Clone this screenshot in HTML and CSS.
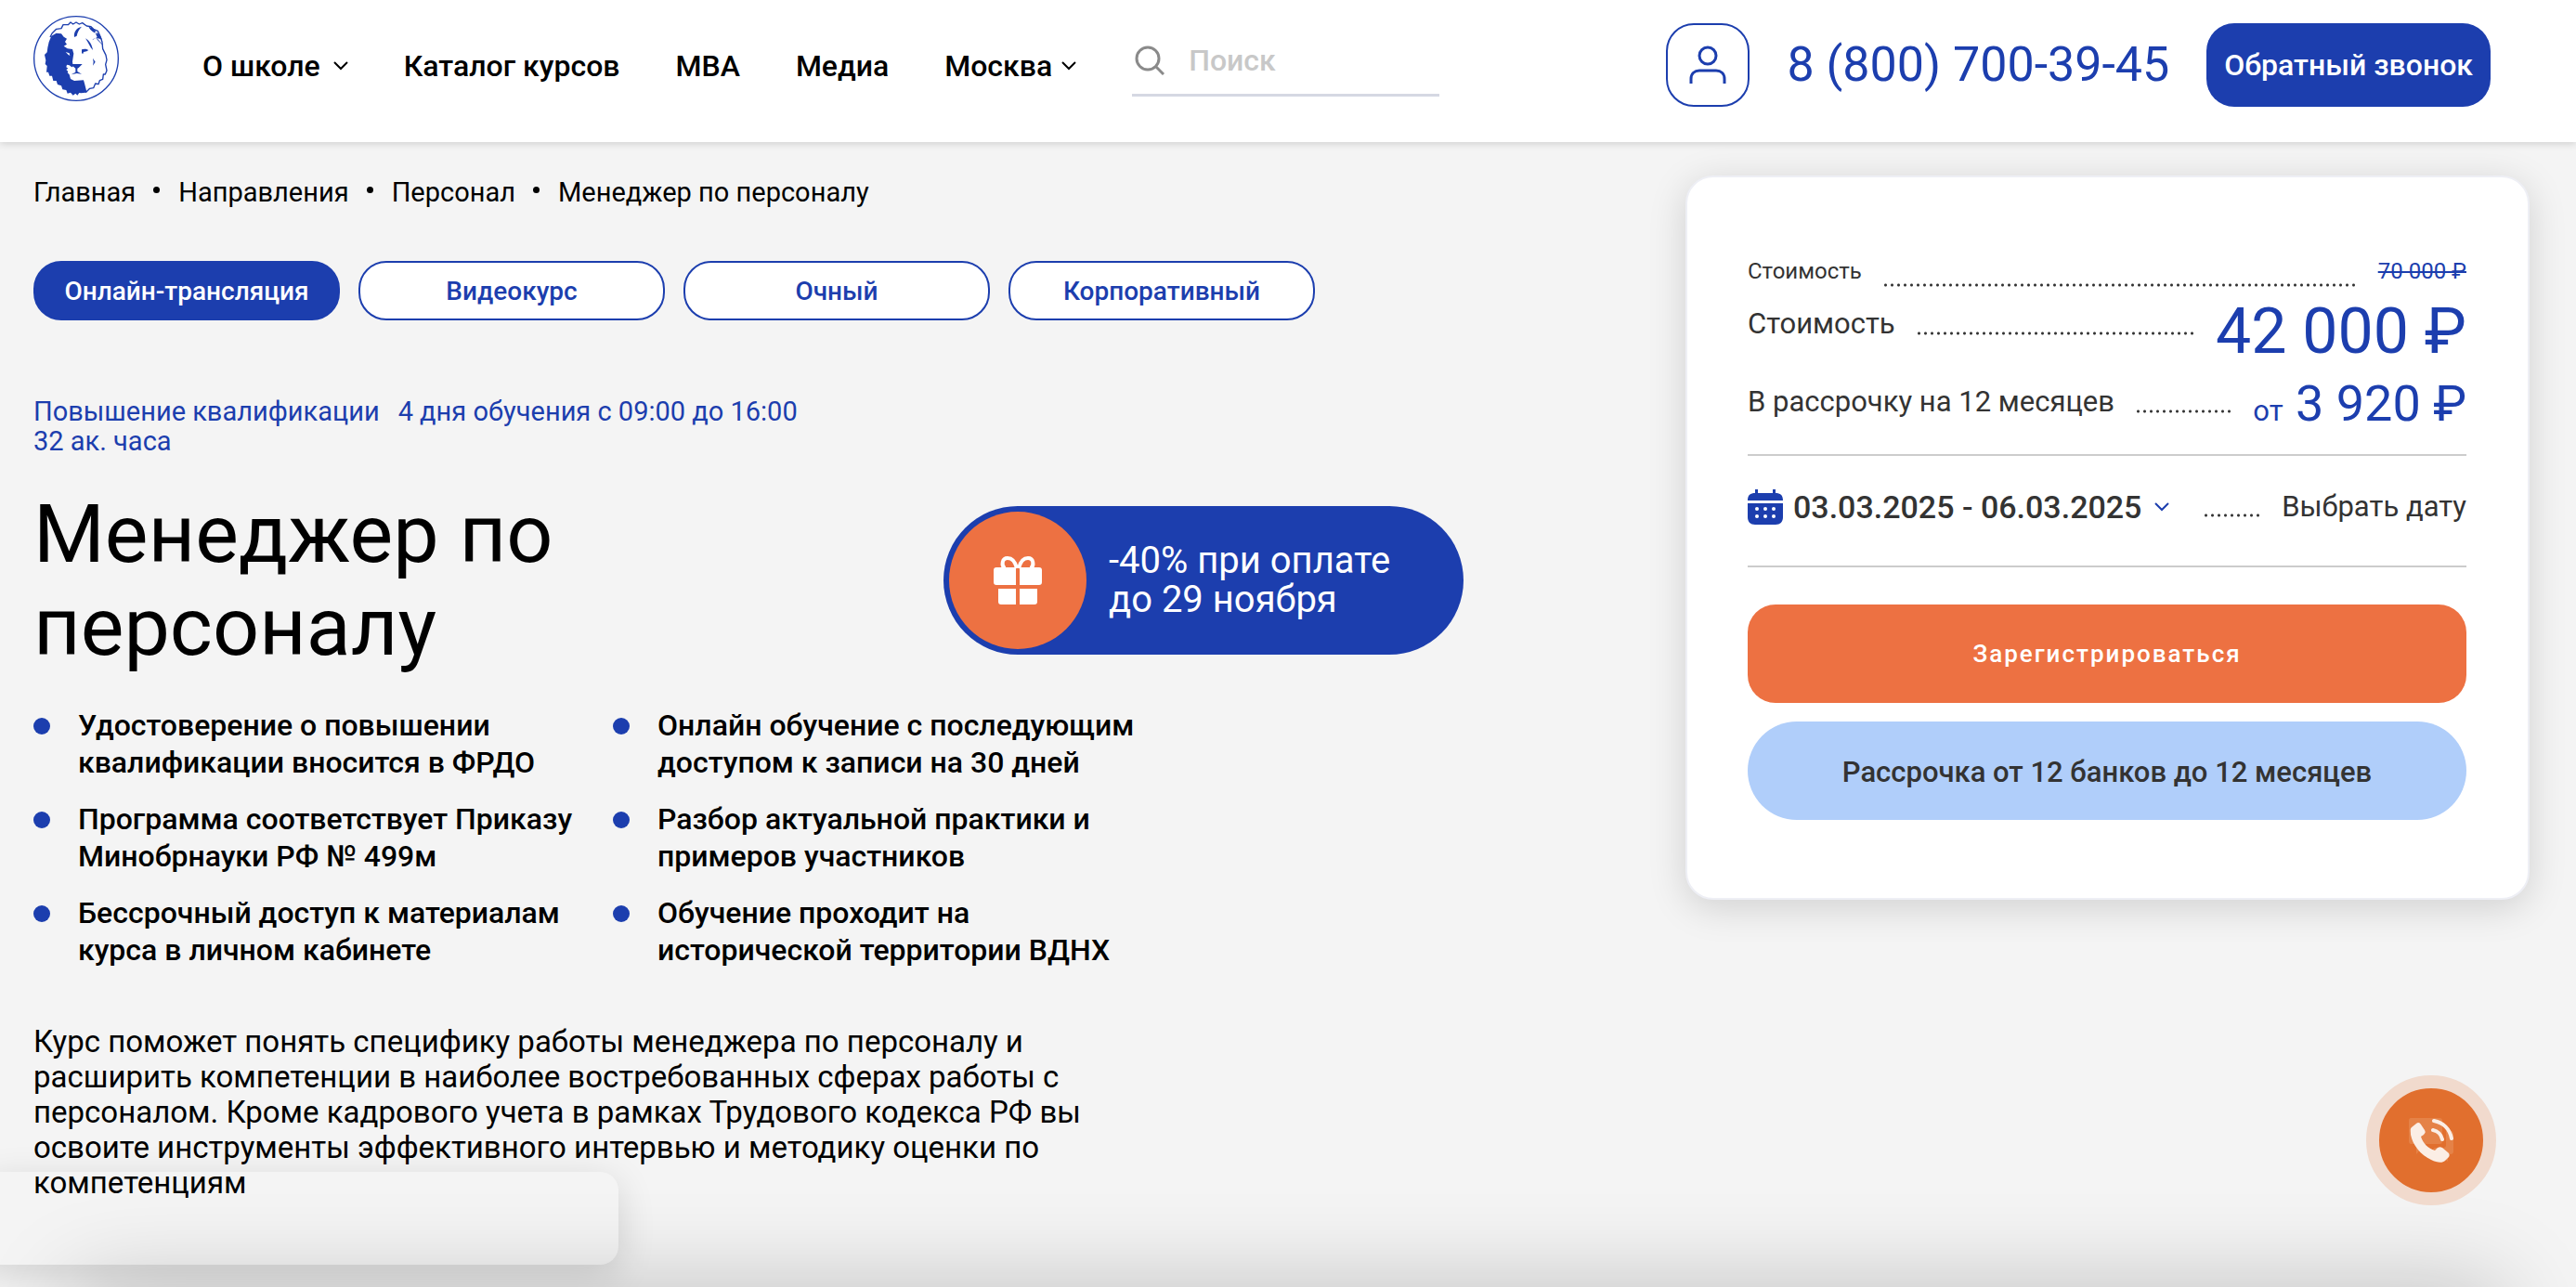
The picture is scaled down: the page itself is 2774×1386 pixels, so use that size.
FILE: index.html
```html
<!doctype html>
<html lang="ru">
<head>
<meta charset="utf-8">
<meta name="viewport" content="width=device-width, initial-scale=1">
<title>Менеджер по персоналу</title>
<link rel="stylesheet" href="styles.css">
</head>

<body>
<header class="header">
	<a class="logo" href="#" aria-label="На главную">
		<svg viewBox="30 27 276 276" width="92" height="92">
			<circle cx="168" cy="165" r="136" fill="none" stroke="#1c3eae" stroke-width="4"/>
			<path fill="none" stroke="#1c3eae" stroke-width="4" stroke-linejoin="round" d="M84 96L90 84 104 70 120 68 126 56 142 56 150 48 158 54 168 48 178 54 188 50 202 60 216 62 224 70 238 76 246 94 252 112 254 134 264 154 267 170 263 184 267 204 262 216 256 216 254 232 244 236 240 248 230 246 224 260 212 262 200 274 198 266"/>
			<path fill="#1c3eae" d="M88 92L104 83 120 85 128 95 138 101 132 111 138 119 128 125 140 133 156 135 160 149 156 175 158 191 154 193 146 187 138 185 136 193 142 197 136 201 142 207 140 211 146 217 150 231 162 237 192 235 196 249 200 265 198 275 184 277 178 276 172 284 166 278 158 284 150 275 140 278 136 267 124 265 120 253 108 249 104 237 94 237 90 221 82 221 78 209 72 209 74 189 68 183 70 171 66 153 74 145 76 130 80 112z"/>
			<path fill="#fff" d="M134 144l12 4 2 8-6-4z"/>
			<g fill="#1c3eae">
				<path d="M150 183h38l-12 12-4 2v10l14 8-16-2-18 4 14-8v-12z"/>
				<path d="M162 96c-2-16 6-30 24-34-10 10-14 20-16 30z"/>
				<path d="M186 136c6-2 14-3 22 2l-6 4-10 2-2 6-4-2z"/>
				<path d="M198 100c12 6 22 22 24 38-10-10-14-24-24-38z"/>
				<path d="M208 62c16 4 24 14 28 24-10-6-20-8-28-24zM220 106c4-8 14-8 32-2-6-14-12-22-24-26l8 18zM234 98l22 24-4-2-16-16zM222 164l8 12-8 12 2-12z"/>
			</g>
		</svg>
	</a>
	<nav class="menu">
		<a href="#">О школе <svg class="arrow arrow-wide" viewBox="0 0 16 10"><path d="M1 1l7 7 7-7"/></svg></a>
		<a href="#">Каталог курсов</a>
		<a href="#">MBA</a>
		<a href="#">Медиа</a>
		<a href="#">Москва <svg class="arrow" viewBox="0 0 16 10"><path d="M1 1l7 7 7-7"/></svg></a>
	</nav>
	<form class="search">
		<svg viewBox="0 0 32 32" width="32" height="32"><circle cx="14" cy="14" r="12"/><path d="M23 23l8 8"/></svg>
		<input type="text" placeholder="Поиск" aria-label="Поиск">
	</form>
	<div class="contacts">
		<button class="user" type="button" aria-label="Личный кабинет">
			<svg viewBox="0 0 40 42" width="40" height="42"><circle cx="20" cy="11" r="9"/><path d="M2 41v-5c0-6 4-9 9-9h18c5 0 9 3 9 9v5"/></svg>
		</button>
		<a class="phone" href="tel:88007003945">8 (800) 700-39-45</a>
		<button class="callback" type="button">Обратный звонок</button>
	</div>
</header>

<main class="main">
	<section class="course">
		<ul class="crumbs">
			<li><a href="#">Главная</a></li>
			<li><a href="#">Направления</a></li>
			<li><a href="#">Персонал</a></li>
			<li>Менеджер по персоналу</li>
		</ul>
		<div class="formats">
			<button class="format active" type="button">Онлайн-трансляция</button>
			<button class="format" type="button">Видеокурс</button>
			<button class="format" type="button">Очный</button>
			<button class="format" type="button">Корпоративный</button>
		</div>
		<div class="info">
			<span>Повышение квалификации</span>
			<span>4 дня обучения с 09:00 до 16:00</span>
			<span>32 ак. часа</span>
		</div>
		<div class="title">
			<h1>Менеджер по персоналу</h1>
			<div class="sale">
				<div class="sale-icon">
					<svg viewBox="0 0 52 52" width="52" height="52">
						<path fill="none" stroke="#fff" stroke-width="4" d="M25 13C23 5 19 2 15 2c-6 0-7 8-3 11M27 13c2-8 6-11 10-11 6 0 7 8 3 11"/>
						<path fill="#fff" d="M3 12h21v19H3c-2 0-3-1-3-3V15c0-2 1-3 3-3zM28 12h21c2 0 3 1 3 3v13c0 2-1 3-3 3H28zM5 35h19v17H8c-2 0-3-1-3-3zM28 35h19v14c0 2-1 3-3 3H28z"/>
					</svg>
				</div>
				<p>-40% при оплате<br>до 29 ноября</p>
			</div>
		</div>
		<ul class="benefits">
			<li>Удостоверение о повышении<br>квалификации вносится в ФРДО</li>
			<li>Онлайн обучение с последующим<br>доступом к записи на 30 дней</li>
			<li>Программа соответствует Приказу<br>Минобрнауки РФ № 499м</li>
			<li>Разбор актуальной практики и<br>примеров участников</li>
			<li>Бессрочный доступ к материалам<br>курса в личном кабинете</li>
			<li>Обучение проходит на<br>исторической территории ВДНХ</li>
		</ul>
		<p class="about">Курс поможет понять специфику работы менеджера по персоналу и<br>расширить компетенции в наиболее востребованных сферах работы с<br>персоналом. Кроме кадрового учета в рамках Трудового кодекса РФ вы<br>освоите инструменты эффективного интервью и методику оценки по<br>компетенциям</p>
	</section>

	<aside class="card">
		<div class="row row-old">
			<span>Стоимость</span>
			<i class="dots"></i>
			<s>70 000 ₽</s>
		</div>
		<div class="row row-price">
			<span>Стоимость</span>
			<i class="dots"></i>
			<b class="price">42 000 ₽</b>
		</div>
		<div class="row row-credit">
			<span>В рассрочку на 12 месяцев</span>
			<i class="dots"></i>
			<b class="credit"><small>от</small> 3 920 ₽</b>
		</div>
		<div class="row row-date">
			<svg class="calendar" viewBox="0 0 38 38" width="38" height="38">
				<path fill="#1c3eae" d="M0 12C0 6 3 4 8 4V0h3v4h16V0h3v4c5 0 8 2 8 8zM0 15h38v15c0 5-3 8-8 8H8c-5 0-8-3-8-8z"/>
				<g fill="#fff"><circle cx="10" cy="21" r="2"/><circle cx="19" cy="21" r="2"/><circle cx="28" cy="21" r="2"/><circle cx="10" cy="29" r="2"/><circle cx="19" cy="29" r="2"/><circle cx="28" cy="29" r="2"/></g>
			</svg>
			<button class="date" type="button">03.03.2025 - 06.03.2025 <svg class="arrow" viewBox="0 0 16 10"><path d="M1 1l7 7 7-7"/></svg></button>
			<i class="dots"></i>
			<a href="#">Выбрать дату</a>
		</div>
		<button class="register" type="button">Зарегистрироваться</button>
		<button class="banks" type="button">Рассрочка от 12 банков до 12 месяцев</button>
	</aside>
</main>

<div class="toast"></div>
<div class="bottom-bar"></div>
<button class="call" type="button" aria-label="Позвонить">
	<svg viewBox="0 0 48 48" width="48" height="48">
		<path fill="#e58247" d="M2 0h31c2 0 3 1 3 3v22c0 2-1 3-3 3H18L8 39V28H2c-1 0-2-1-2-3V3c0-2 1-3 2-3zM40 14h5c2 0 3 1 3 3v19c0 2-1 3-3 3h-3v8l-8-8H20l8-7h9c2 0 3-1 3-3z"/>
		<path fill="#fbeee5" d="M3 10l5-4c2-2 4-1 5 1l4 6c1 2 1 3-1 5l-3 2c2 7 8 13 15 15l3-3c2-1 3-1 5 0l6 5c2 2 2 3 1 5l-4 4c-3 3-9 2-15-1C13 40 4 29 2 18c0-4-1-6 1-8z"/>
		<path fill="none" stroke="#fbeee5" stroke-width="4" stroke-linecap="round" d="M27 3c10 2 17 9 19 19M26 13c5 1 9 5 10 10"/>
	</svg>
</button>
</body>
</html>
```
FILE: styles.css
```css
* {margin:0; padding:0; box-sizing:border-box; list-style:none;}
body {background:#f4f4f4; color:#000; font:28px/32px Roboto, "Liberation Sans", sans-serif; min-height:100vh; overflow:hidden;}
a {color:inherit; text-decoration:none;}
button {border:0; background:none; font:inherit; color:inherit; cursor:pointer; white-space:nowrap;}
svg {display:block; flex:none;}

.header {display:flex; align-items:flex-start; height:153px; padding:17px 92px 0 36px; background:#fff; box-shadow:0 2px 8px rgba(0,0,0,.15); position:relative;}
.logo {margin-right:90px;}
.menu {display:flex; gap:60px; margin:8px 60px 0 0; height:92px; align-items:center; font-size:32px; font-weight:500; white-space:nowrap;}
.menu a {display:flex; align-items:center; gap:10px;}
.arrow {width:16px; height:10px; fill:none; stroke:currentColor; stroke-width:2;}
.arrow-wide {margin-left:4px;}
.search {display:flex; align-items:center; gap:26px; width:331px; height:76px; margin-top:11px; padding-left:3px; border-bottom:3px solid #d5d8e3;}
.search svg {fill:none; stroke:#8a8a8a; stroke-width:3;}
.search input {width:100%; min-width:0; border:0; outline:0; background:none; font:500 32px/40px Roboto, sans-serif;}
.search input::placeholder {color:#c8c8c8; opacity:1;}
.contacts {display:flex; align-items:center; gap:40px; margin:8px 0 0 auto; color:#1c3eae;}
.user {display:flex; align-items:center; justify-content:center; width:90px; height:90px; border:2px solid #1c3eae; border-radius:30px; background:#fff;}
.user svg {fill:none; stroke:#1c3eae; stroke-width:3;}
.phone {font-size:52px; line-height:60px; white-space:nowrap;}
.callback {height:90px; padding:0 19px; border-radius:30px; background:#1c3eae; color:#fff; font-size:32px; font-weight:500;}

.main {display:grid; grid-template-columns:minmax(0,1fr) minmax(600px,909px); align-items:start; padding:36px 50px 0 36px;}
.crumbs {display:flex; gap:46px; padding-top:2px; font-size:29px;}
.crumbs li {position:relative;}
.crumbs li + li:before {content:""; position:absolute; left:-27px; top:10px; width:7px; height:7px; border-radius:50%; background:#000;}
.formats {display:flex; gap:20px; margin-top:58px;}
.format {width:330px; height:64px; padding-top:2px; border:2px solid #1c3eae; border-radius:30px; background:#fff; color:#1c3eae; font-weight:500;}
.format.active {background:#1c3eae; color:#fff;}
.info {display:flex; flex-wrap:wrap; column-gap:20px; max-width:900px; margin-top:82px; color:#1c3eae; font-size:29px;}
.title {display:flex; align-items:center; margin-top:34px;}
.title h1 {width:980px; font-size:88px; line-height:100px; font-weight:400;}
.sale {display:flex; align-items:center; gap:24px; width:560px; height:160px; padding-left:6px; border-radius:80px; background:#1c3eae; color:#fff; font-size:40px; line-height:42px;}
.sale-icon {display:flex; align-items:center; justify-content:center; width:148px; height:148px; border-radius:50%; background:#ed7142;}
.benefits {display:grid; grid-template-columns:576px 576px; column-gap:48px; row-gap:21px; margin-top:36px; font-size:32px; line-height:40px; font-weight:500;}
.benefits li {position:relative; padding-left:48px; white-space:nowrap;}
.benefits li:before {content:""; position:absolute; left:0; top:12px; width:18px; height:18px; border-radius:50%; background:#1c3eae;}
.about {margin-top:60px; font-size:33px; line-height:38px;}

.card {padding:76px 66px 84px 65px; border:2px solid #eeeff5; border-radius:30px; background:#fff; box-shadow:0 8px 40px rgba(0,0,0,.15); color:#333; font-size:31px;}
.row {display:flex; align-items:baseline; white-space:nowrap;}
.dots {flex:1; height:4px; margin:0 22px; background:radial-gradient(circle, #333 1px, transparent 2px) 0 0/7px 4px;}
.row-old {height:50px; align-items:center; font-size:24px;}
.row-old .dots {align-self:flex-end; margin-bottom:8px;}
.row-old s {color:#1c3eae; text-decoration-thickness:2px;}
.row-price {height:84px; align-items:flex-start;}
.row-price span {padding-top:16px;}
.row-price .dots {margin-top:40px;}
.row b {color:#1c3eae; font-weight:400;}
.price {font-size:68px; line-height:80px;}
.row-credit {height:90px; align-items:flex-start; border-bottom:2px solid #ccc;}
.row-credit span {padding-top:16px;}
.row-credit .dots {margin-top:40px;}
.credit {font-size:54px; line-height:68px;}
.credit small {font-size:31px;}
.row-date {height:120px; padding-bottom:8px; align-items:center; border-bottom:2px solid #ccc;}
.row-date .dots {margin-top:18px; margin-left:36px;}
.calendar {margin-right:11px;}
.date {display:flex; align-items:center; gap:14px; font-size:34px; font-weight:500;}
.date .arrow {stroke:#1c3eae;}
.register, .banks {display:block; width:100%; height:106px; text-align:center;}
.register {margin-top:40px; border-radius:30px; background:#ed7142; color:#fff; font-size:26px; font-weight:500; letter-spacing:2px;}
.banks {margin-top:20px; padding-top:4px; border-radius:53px; background:#b0cefa; color:#333; font-weight:500;}

.toast {position:fixed; left:-20px; bottom:24px; width:686px; height:100px; border-radius:20px; box-shadow:0 10px 40px rgba(0,0,0,.14); pointer-events:none;}
.bottom-bar {position:fixed; left:80px; right:80px; bottom:-100px; height:100px; box-shadow:0 0 100px rgba(0,0,0,.22); pointer-events:none;}
.call {position:fixed; right:86px; bottom:88px; display:flex; align-items:center; justify-content:center; width:140px; height:140px; border:14px solid #f1dacd; border-radius:50%; background:#e16f2e;}
```
